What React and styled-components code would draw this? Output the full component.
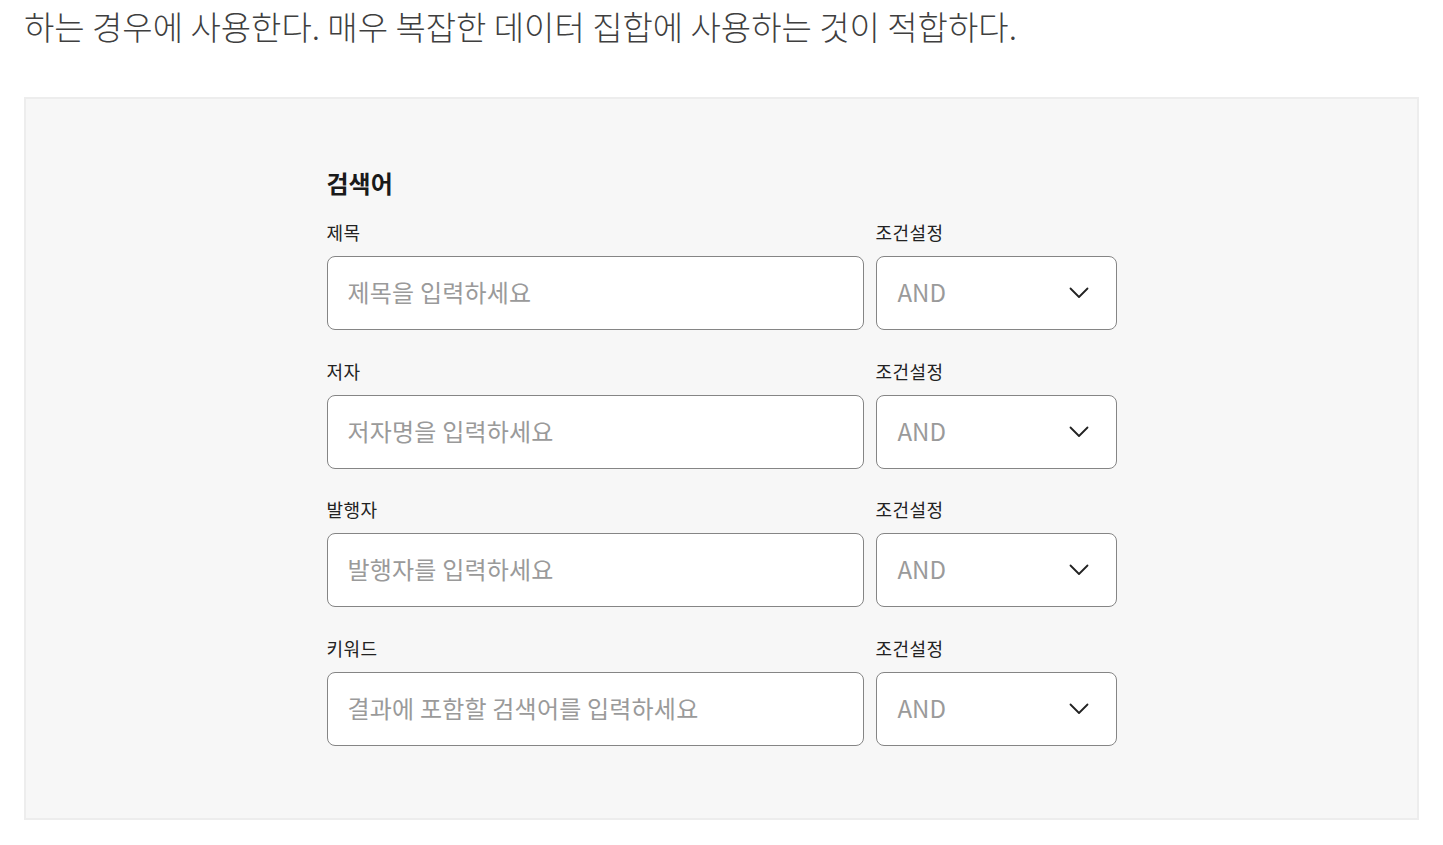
import styled, { createGlobalStyle } from 'styled-components'

const GlobalStyle = createGlobalStyle`
    body {
        margin: 0;
        background: #fff;
        font-family: "Noto Sans CJK KR", "Noto Sans", sans-serif;
    }
`

const Intro = styled.p`
    margin: 0;
    padding: 0 24px;
    font-size: 33px;
    font-weight: 300;
    line-height: 52px;
    color: #3f3f3f;
    white-space: nowrap;
`

const Panel = styled.section`
    margin: 45px 24px 0 24px;
    box-sizing: border-box;
    height: 723px;
    background: #f7f7f7;
    border: 2px solid #ededed;
    padding-top: 68px;
    display: flex;
    justify-content: center;
`

const Form = styled.div`
    width: 790px;
    display: flex;
    flex-direction: column;
`

const Heading = styled.h3`
    margin: 0 0 23px 0;
    font-size: 24px;
    line-height: 31px;
    font-weight: 700;
    color: #1a1a1a;
`

const Row = styled.div`
    display: grid;
    grid-template-columns: 537px 241px;
    column-gap: 12px;
    margin-bottom: 29.5px;
`

const Field = styled.label`
    display: flex;
    flex-direction: column;
    gap: 13px;
`

const Label = styled.span`
    font-size: 18px;
    line-height: 22px;
    letter-spacing: 0.4px;
    color: #222;
`

const Input = styled.input`
    box-sizing: border-box;
    height: 74px;
    width: 100%;
    border: 1px solid #858585;
    border-radius: 8px;
    background: #fff;
    padding: 0 20px 3px 20px;
    font-family: inherit;
    font-size: 24px;
    letter-spacing: 0.2px;
    color: #222;
    outline: none;
    &::placeholder {
        color: #9a9a9a;
    }
`

const Select = styled.div`
    box-sizing: border-box;
    height: 74px;
    border: 1px solid #858585;
    border-radius: 8px;
    background: #fff;
    padding: 0 27px 3px 21px;
    display: flex;
    align-items: center;
    justify-content: space-between;
    font-size: 24px;
    color: #9a9a9a;
`

const Chevron = () => (
    <svg width="20" height="12" viewBox="0 0 20 12" fill="none" style={{ marginTop: 3 }}>
        <path d="M1.5 1.5 L10 10 L18.5 1.5" stroke="#222" strokeWidth="1.8" strokeLinecap="round" strokeLinejoin="round" />
    </svg>
)

const fields = [
    { label: '제목', placeholder: '제목을 입력하세요' },
    { label: '저자', placeholder: '저자명을 입력하세요' },
    { label: '발행자', placeholder: '발행자를 입력하세요' },
    { label: '키워드', placeholder: '결과에 포함할 검색어를 입력하세요' },
]

const App = () => {
    return (
        <>
            <GlobalStyle />
            <Intro>하는 경우에 사용한다. 매우 복잡한 데이터 집합에 사용하는 것이 적합하다.</Intro>
            <Panel>
                <Form>
                    <Heading>검색어</Heading>
                    {fields.map(f => (
                        <Row key={f.label}>
                            <Field>
                                <Label>{f.label}</Label>
                                <Input placeholder={f.placeholder} />
                            </Field>
                            <Field>
                                <Label>조건설정</Label>
                                <Select>
                                    <span>AND</span>
                                    <Chevron />
                                </Select>
                            </Field>
                        </Row>
                    ))}
                </Form>
            </Panel>
        </>
    )
}

export default App
